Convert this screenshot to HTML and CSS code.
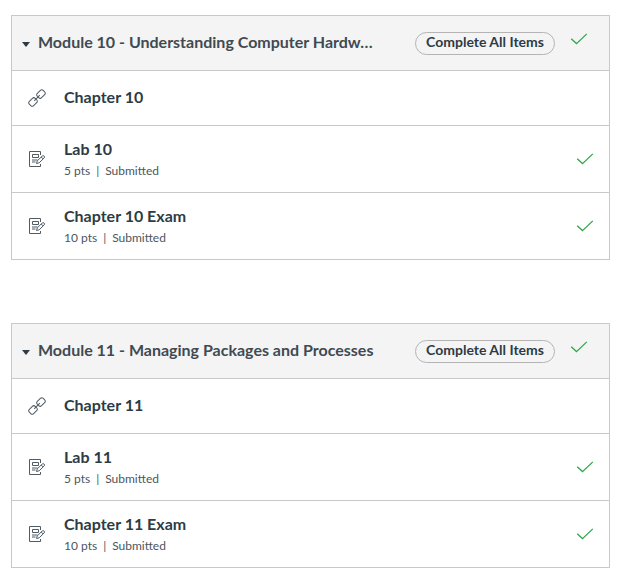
FILE: index.html
```
<!DOCTYPE html>
<html lang="en">
<head>
<meta charset="utf-8">
<title>Modules</title>
<link rel="stylesheet" href="styles.css">
</head>
<body>
<svg class="defs" aria-hidden="true">
  <symbol id="check" viewBox="0 0 18 14"><path d="M1.200 6.700 6.500 11.600 16.800 1.900"/></symbol>
  <symbol id="link" viewBox="0 0 18 18"><g transform="rotate(-45 9 9)"><rect x="-.8" y="6" width="8.300" height="6" rx="2"/><rect x="10.500" y="6" width="8.300" height="6" rx="2"/><path d="M5 9h8"/></g></symbol>
  <symbol id="task" viewBox="0 0 18 18"><path d="M12.500 5V1.500H1.500V16.500H12.500V14M4.500 4.500H10.500V7.500H4.500ZM4 10H9.500M4 12H7.500M8.500 13.500 9.300 10.900 14.300 5.900Q15.200 5.200 16.100 6.100T16.200 7.900L11.200 12.800ZM13.200 7 15 8.900"/></symbol>
</svg>
<main class="modules">
  <section class="module">
    <header class="module-header">
      <span class="caret"></span>
      <h2 class="module-title">Module 10 - Understanding Computer Hardw…</h2>
      <span class="pill">Complete All Items</span>
      <svg class="check"><use href="#check"/></svg>
    </header>
    <div class="item short"><svg class="icon"><use href="#link"/></svg><div class="text"><div class="name">Chapter 10</div></div></div>
    <div class="item"><svg class="icon"><use href="#task"/></svg><div class="text"><div class="name">Lab 10</div><div class="meta"><span>5 pts</span><span>|</span><span>Submitted</span></div></div><svg class="check"><use href="#check"/></svg></div>
    <div class="item"><svg class="icon"><use href="#task"/></svg><div class="text"><div class="name">Chapter 10 Exam</div><div class="meta"><span>10 pts</span><span>|</span><span>Submitted</span></div></div><svg class="check"><use href="#check"/></svg></div>
  </section>
  <section class="module">
    <header class="module-header">
      <span class="caret"></span>
      <h2 class="module-title">Module 11 - Managing Packages and Processes</h2>
      <span class="pill">Complete All Items</span>
      <svg class="check"><use href="#check"/></svg>
    </header>
    <div class="item short"><svg class="icon"><use href="#link"/></svg><div class="text"><div class="name">Chapter 11</div></div></div>
    <div class="item"><svg class="icon"><use href="#task"/></svg><div class="text"><div class="name">Lab 11</div><div class="meta"><span>5 pts</span><span>|</span><span>Submitted</span></div></div><svg class="check"><use href="#check"/></svg></div>
    <div class="item"><svg class="icon"><use href="#task"/></svg><div class="text"><div class="name">Chapter 11 Exam</div><div class="meta"><span>10 pts</span><span>|</span><span>Submitted</span></div></div><svg class="check"><use href="#check"/></svg></div>
  </section>
</main>
</body>
</html>
```
FILE: styles.css
```
* { box-sizing: border-box; }
body { margin: 0; background: #fff; color: #2d3b45; font-family: Lato, "Liberation Sans", sans-serif; }
.defs { position: absolute; width: 0; height: 0; }
.modules { display: flex; flex-direction: column; gap: 63px; padding: 15px 14px 0 11px; }
.module { border: 1px solid #c7c9cb; }
.module-header { display: flex; align-items: center; height: 54px; background: #f4f4f4; padding: 0 21px 0 10px; }
.caret { width: 7px; border: 3.5px solid transparent; border-width: 5px 4px 0; width: 8px; border-top-color: #2d3b45; margin: 2px 8px 0 0; }
.module-title { width: 340px; margin: 0; padding-bottom: 2px; color: #3f4a53; font-size: 16px; line-height: 24px; font-weight: 700; white-space: nowrap; }
.pill { width: 140px; height: 23px; margin: 1px 0 0 37px; border: 1px solid #b4b4b4; border-radius: 12px; font-size: 14px; line-height: 18px; font-weight: 700; text-align: center; white-space: nowrap; }
.module-header .check { margin: 0 0 8px auto; }
.item { display: flex; align-items: center; height: 67px; border-top: 1px solid #c7c9cb; padding: 0 15px 0 16px; }
.short { height: 55px; }
.short .name { padding-bottom: 2px; }
.icon { width: 18px; height: 18px; margin-right: 18px; fill: none; stroke: #505b64; stroke-width: 1; }
.text { flex: 1; }
.name { font-size: 16px; line-height: 24px; font-weight: 700; }
.item:not(.short) .name { margin: -1px 0 1px; }
.meta { display: flex; gap: 6px; color: #4c565e; font-size: 12px; line-height: 18px; }
.check { width: 18px; height: 14px; fill: none; stroke: #2fa84a; stroke-width: 1.3; flex: none; }
```
